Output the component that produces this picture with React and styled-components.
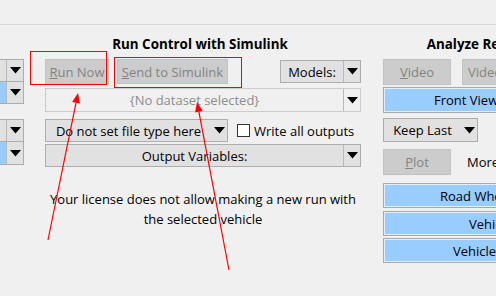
import React from 'react';
import styled, { createGlobalStyle } from 'styled-components';

const Global = createGlobalStyle`
  html, body { margin: 0; padding: 0; background: #f0f0f0; overflow: hidden; }
  body {
    font-family: "Open Sans", "Noto Sans", sans-serif;
    font-size: 13px;
    color: #000;
  }
`;

const Page = styled.div`
  position: relative;
  width: 496px;
  height: 296px;
  overflow: hidden;
`;

const TopBand = styled.div`
  height: 24px;
  border-bottom: 1px solid #d9d9d9;
`;

const Main = styled.div`
  display: flex;
  align-items: flex-start;
  margin-left: -16px;
  width: 700px;
`;

const LeftCol = styled.div`
  width: 40px;
  flex-shrink: 0;
  padding-top: 34px;
  display: flex;
  flex-direction: column;
`;

const MidCol = styled.div`
  width: 316px;
  flex-shrink: 0;
  margin-left: 21px;
  display: flex;
  flex-direction: column;
`;

const RightCol = styled.div`
  width: 220px;
  flex-shrink: 0;
  margin-left: 22px;
  display: flex;
  flex-direction: column;
`;

const Title = styled.div`
  height: 34px;
  line-height: 20px;
  padding-top: 9px;
  padding-right: ${p => p.$pr || 0}px;
  box-sizing: border-box;
  font-weight: bold;
  font-size: 13.4px;
  text-align: center;
  white-space: nowrap;
`;

const Row = styled.div`
  display: flex;
  align-items: center;
  margin-top: ${p => p.$mt || 0}px;
`;

const Combo = styled.div`
  box-sizing: border-box;
  display: flex;
  width: ${p => (p.$w ? `${p.$w}px` : '100%')};
  height: ${p => p.$h || 23}px;
  margin-top: ${p => p.$mt || 0}px;
  margin-left: ${p => (p.$push ? 'auto' : '0')};
  border: 1px solid ${p => (p.$flat ? '#cccccc' : '#adadad')};
  background: ${p => (p.$flat ? '#f0f0f0' : '#e1e1e1')};
  flex-shrink: 0;
`;

const ComboText = styled.div`
  flex: 1;
  display: flex;
  align-items: center;
  justify-content: center;
  white-space: nowrap;
  overflow: hidden;
  color: ${p => (p.$muted ? '#8d8d8d' : '#000')};
  background: ${p => (p.$blue ? '#99ccff' : 'transparent')};
`;

const ComboArrow = styled.div`
  width: 16px;
  display: flex;
  align-items: center;
  justify-content: center;
  border-left: ${p => (p.$divider ? '1px solid #b8b8b8' : 'none')};
  flex-shrink: 0;
`;

const Button = styled.div`
  box-sizing: border-box;
  width: ${p => p.$w}px;
  height: ${p => p.$h || 25}px;
  border: 1px solid #c2c2c2;
  background: #cccccc;
  color: #838383;
  display: flex;
  align-items: center;
  justify-content: ${p => (p.$left ? 'flex-start' : 'center')};
  padding-left: ${p => p.$pl || 0}px;
  margin-left: ${p => p.$ml || 0}px;
  white-space: nowrap;
  overflow: hidden;
  flex-shrink: 0;
`;

const BlueBar = styled.div`
  box-sizing: border-box;
  width: 100%;
  height: ${p => p.$h || 25}px;
  margin-top: ${p => p.$mt || 0}px;
  border: 1px solid #a9a9a9;
  box-shadow: inset 0 0 0 1px #e3eefa;
  background: #99ccff;
  display: flex;
  align-items: center;
  padding-left: ${p => p.$indent}px;
  white-space: nowrap;
  overflow: hidden;
`;

const CheckBox = styled.div`
  box-sizing: border-box;
  width: 13px;
  height: 13px;
  border: 1px solid #333;
  background: #fff;
  margin-left: 9px;
  margin-right: 4px;
  flex-shrink: 0;
`;

const Label = styled.span`
  white-space: nowrap;
  margin-left: ${p => p.$ml || 0}px;
`;

const Message = styled.div`
  margin-top: 22px;
  text-align: center;
  line-height: 20px;
  white-space: nowrap;
`;

const Mark = styled.div`
  position: absolute;
  left: ${p => p.$x}px;
  top: ${p => p.$y}px;
  width: ${p => p.$w}px;
  height: ${p => p.$h}px;
  border: 1px solid #ff0000;
  box-sizing: border-box;
  pointer-events: none;
`;

const Overlay = styled.svg`
  position: absolute;
  left: 0;
  top: 0;
  pointer-events: none;
`;

const Tri = () => (
  <svg width="11" height="7" viewBox="0 0 11 7">
    <polygon points="0,0 11,0 5.5,6.5" fill="#000" />
  </svg>
);

const Dropdown = ({ w, h, mt, push, flat, blue, muted, divider = true, children }) => (
  <Combo $w={w} $h={h} $mt={mt} $push={push} $flat={flat}>
    <ComboText $blue={blue} $muted={muted}>{children}</ComboText>
    <ComboArrow $divider={divider}>
      <Tri />
    </ComboArrow>
  </Combo>
);

export default function App() {
  return (
    <Page>
      <Global />
      <TopBand />
      <Main>
        <LeftCol>
          <Dropdown w={40} />
          <Dropdown w={40} mt={-1} blue />
          <Dropdown w={40} mt={15} />
          <Dropdown w={40} mt={-1} h={24} blue />
        </LeftCol>

        <MidCol>
          <Title $pr={6}>Run Control with Simulink</Title>
          <Row>
            <Button $w={64}><u>R</u>un Now</Button>
            <Button $w={111} $ml={8}><u>S</u>end to Simulink</Button>
            <Dropdown w={81} push>Models:</Dropdown>
          </Row>
          <Dropdown mt={4} h={24} flat muted>{'{No dataset selected}'}</Dropdown>
          <Row $mt={7}>
            <Dropdown w={183} divider={false}>Do not set file type here</Dropdown>
            <CheckBox />
            <Label>Write all outputs</Label>
          </Row>
          <Dropdown mt={2} h={23}>Output Variables:</Dropdown>
          <Message>
            Your license does not allow making a new run with
            <br />
            the selected vehicle
          </Message>
        </MidCol>

        <RightCol>
          <Title $pr={28}>Analyze Results</Title>
          <Row>
            <Button $w={68} $h={26}><u>V</u>ideo</Button>
            <Button $w={100} $h={26} $ml={11} $left $pl={5}>Video + Plot</Button>
          </Row>
          <BlueBar $mt={2} $h={26} $indent={50}>Front View</BlueBar>
          <Dropdown w={95} h={24} mt={5} divider={false}>Keep Last</Dropdown>
          <Row $mt={7}>
            <Button $w={68} $h={26}><u>P</u>lot</Button>
            <Label $ml={16}>More plots: 0</Label>
          </Row>
          <BlueBar $mt={8} $indent={56}>Road Wheel Steer</BlueBar>
          <BlueBar $mt={3} $indent={85}>Vehicle Path</BlueBar>
          <BlueBar $mt={2} $indent={69}>Vehicle Speed</BlueBar>
        </RightCol>
      </Main>

      <Mark $x={30} $y={51} $w={77} $h={34} />
      <Mark $x={114} $y={57} $w={128} $h={31} />
      <Overlay width="496" height="296" viewBox="0 0 496 296">
        <line x1="48" y1="240" x2="76" y2="102.8" stroke="#ff0000" strokeWidth="1.2" />
        <polygon points="78,93 79.9,103.6 72.1,102" fill="#ff0000" />
        <line x1="229" y1="270" x2="198.9" y2="111.8" stroke="#ff0000" strokeWidth="1.2" />
        <polygon points="197,102 202.8,111.1 195,112.6" fill="#ff0000" />
      </Overlay>
    </Page>
  );
}
